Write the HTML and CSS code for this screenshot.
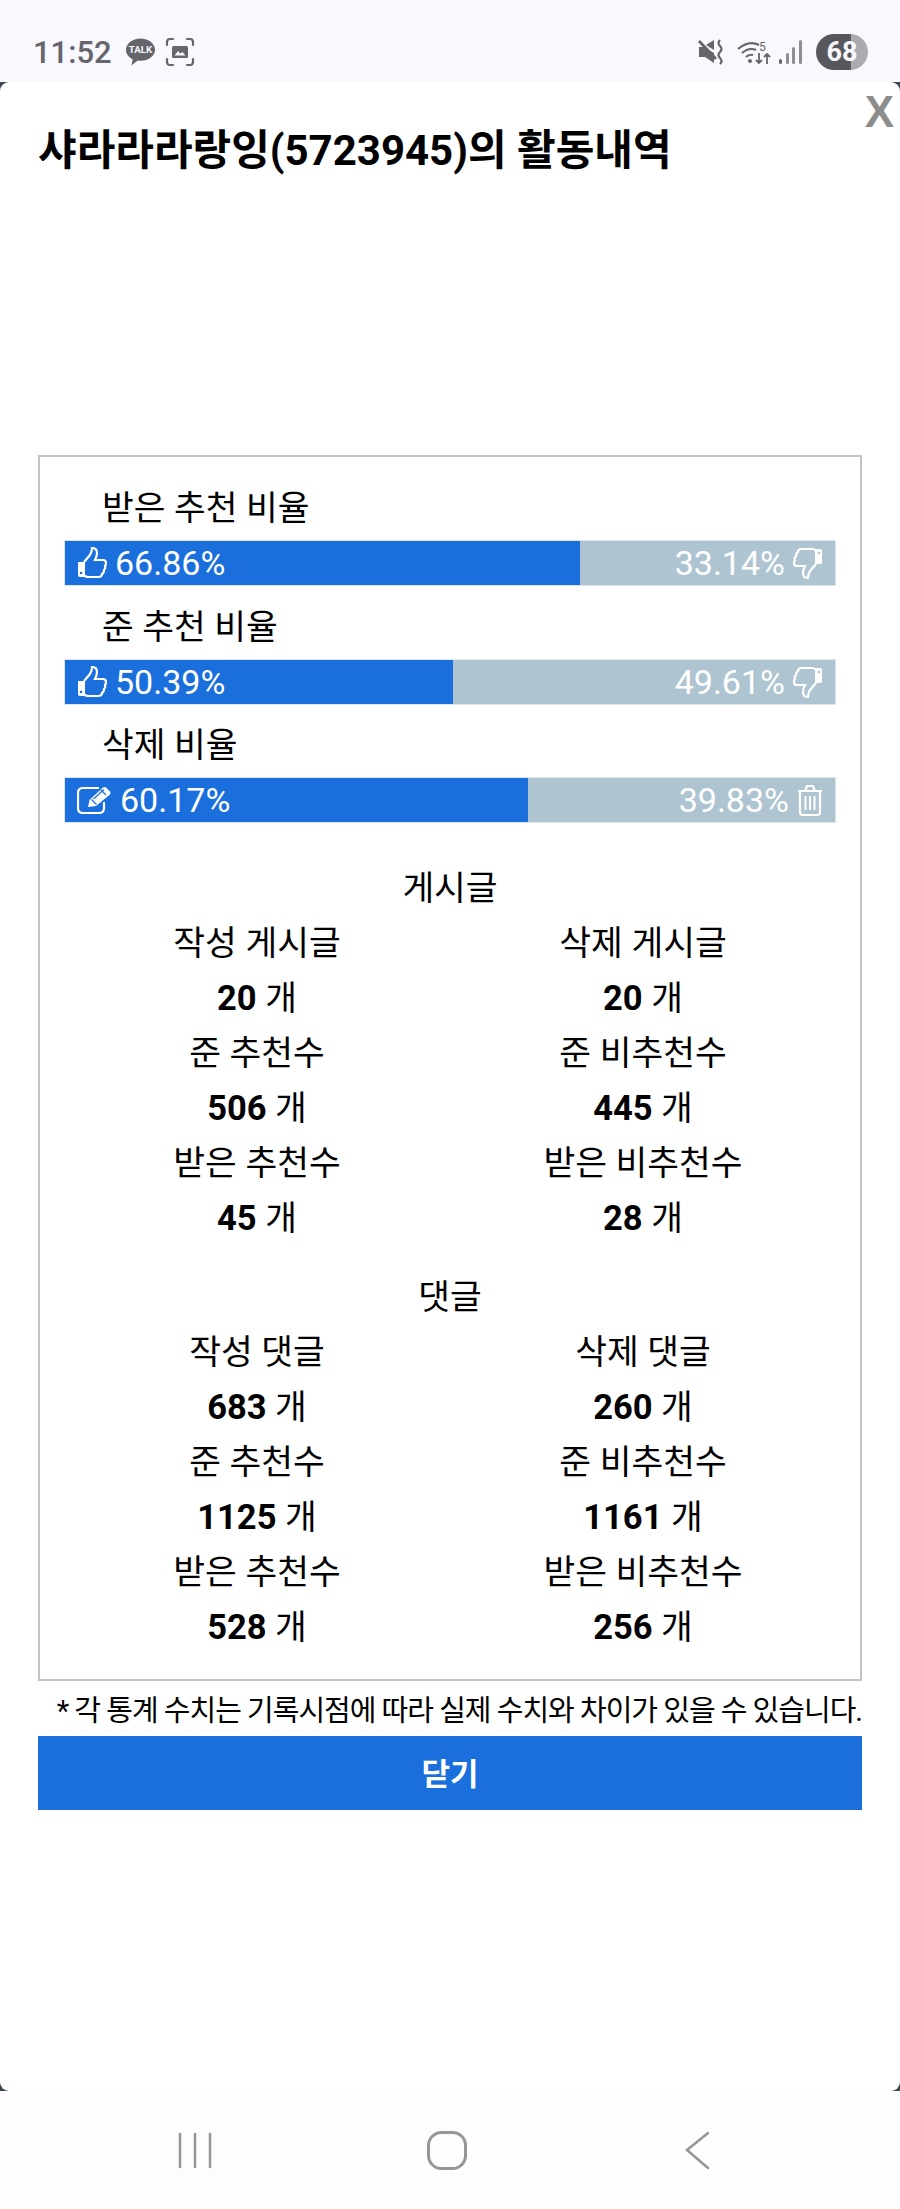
FILE: index.html
```html
<!DOCTYPE html>
<html lang="ko">
<head>
    <meta charset="UTF-8">
    <meta name="viewport" content="width=device-width, initial-scale=1.0">
    <title>활동내역</title>
    <link rel="stylesheet" href="styles.css">
</head>
<body>
    <header class="status">
        <span class="clock">11:52</span>
        <svg class="talk" viewBox="0 0 32 30"><path d="M16 1C7.700 1 1 6.300 1 12.600c0 4.200 2.800 7.800 7 9.800L6.600 29l6.600-5.200c.9.100 1.800.2 2.800.2 8.300 0 15-5.100 15-11.400S24.300 1 16 1z" fill="#65656b"/><text x="16" y="16.500" text-anchor="middle" class="talk-text">TALK</text></svg>
        <svg class="capture" viewBox="0 0 30 30" fill="none" stroke="#65656b" stroke-width="2.200" stroke-linecap="round"><path d="M2 8V5q0-3 3-3h3M22 2h3q3 0 3 3v3M28 22v3q0 3-3 3h-3M8 28H5q-3 0-3-3v-3"/><rect x="7" y="9" width="16" height="12" rx="1.500" fill="#65656b" stroke="none"/><path d="M9.500 18.500l3.500-4.500 2.500 2.500 2-1.500 3 3.500z" fill="#f8f8fe" stroke="none"/></svg>
        <span class="status-right">
            <svg class="mute" viewBox="0 0 26 26"><path d="M1 8h5l10 6v10L7 18H1z" fill="#65656b"/><path d="M1 2l17 18" stroke="#65656b" stroke-width="2.800"/><path d="M8 6l8-5v10z" fill="#65656b"/><path d="M22 1q-3 3 0 6t0 6 0 6 0 6" fill="none" stroke="#65656b" stroke-width="2.200"/></svg>
            <svg class="wifi" viewBox="0 0 35 26" fill="none" stroke="#65656b" stroke-width="2.200"><path d="M1 10q11-9 21-4M5 14q7-6 14-3M9 18q3-3 7-2"/><circle cx="13" cy="22" r="2" fill="#65656b" stroke="none"/><text x="22" y="12" class="wifi-text">5</text><path d="M22 14v10M19 21l3 3 3-3M30 25V15M27 18l3-3 3 3" stroke-width="1.800"/></svg>
            <svg class="signal" viewBox="0 0 23 24"><rect x="0" y="19" width="3" height="5" rx="1.500" fill="#65656b"/><rect x="7" y="13" width="3" height="11" rx="1.500" fill="#8d8d92"/><rect x="13" y="7" width="3" height="17" rx="1.500" fill="#8d8d92"/><rect x="20" y="0" width="3" height="24" rx="1.500" fill="#8d8d92"/></svg>
            <span class="battery">68</span>
        </span>
    </header>

    <div class="screen">
        <div class="popup">
            <a href="#" class="close-x">X</a>
            <h1 class="title">샤라라라랑잉(5723945)의 활동내역</h1>

            <div class="card">
                <div class="rates">
                    <div class="rate-label">받은 추천 비율</div>
                    <div class="bar">
                        <div class="bar-fill" style="width: 66.86%"></div>
                        <span class="bar-left">
                            <svg class="icon" viewBox="0 0 30 32" fill="none" stroke="#fff" stroke-width="2.200"><path d="M1 15h7v15H3q-2 0-2-2z" fill="#fff" stroke="none"/><circle cx="4" cy="26" r="1.300" fill="#1a6fdc" stroke="none"/><path d="M7 15l6-7q2-3 2-7 5 0 5 5 0 3-2 7h8q3 0 3 3 0 2-1 3 1 2-1 4 0 3-2 4 0 3-4 3H11q-2 0-4-1.500"/></svg>
                            66.86%
                        </span>
                        <span class="bar-right">
                            33.14%
                            <svg class="icon" viewBox="0 0 30 32" fill="none" stroke="#fff" stroke-width="2.200"><path d="M29 17h-7V2h5q2 0 2 2z" fill="#fff" stroke="none"/><circle cx="26" cy="6" r="1.300" fill="#aec5d1" stroke="none"/><path d="M23 17l-6 7q-2 3-2 7-5 0-5-5 0-3 2-7H4q-3 0-3-3 0-2 1-3-1-2 1-4 0-3 2-4 0-3 4-3h10q2 0 4 1.500"/></svg>
                        </span>
                    </div>

                    <div class="rate-label">준 추천 비율</div>
                    <div class="bar">
                        <div class="bar-fill" style="width: 50.39%"></div>
                        <span class="bar-left">
                            <svg class="icon" viewBox="0 0 30 32" fill="none" stroke="#fff" stroke-width="2.200"><path d="M1 15h7v15H3q-2 0-2-2z" fill="#fff" stroke="none"/><circle cx="4" cy="26" r="1.300" fill="#1a6fdc" stroke="none"/><path d="M7 15l6-7q2-3 2-7 5 0 5 5 0 3-2 7h8q3 0 3 3 0 2-1 3 1 2-1 4 0 3-2 4 0 3-4 3H11q-2 0-4-1.500"/></svg>
                            50.39%
                        </span>
                        <span class="bar-right">
                            49.61%
                            <svg class="icon" viewBox="0 0 30 32" fill="none" stroke="#fff" stroke-width="2.200"><path d="M29 17h-7V2h5q2 0 2 2z" fill="#fff" stroke="none"/><circle cx="26" cy="6" r="1.300" fill="#aec5d1" stroke="none"/><path d="M23 17l-6 7q-2 3-2 7-5 0-5-5 0-3 2-7H4q-3 0-3-3 0-2 1-3-1-2 1-4 0-3 2-4 0-3 4-3h10q2 0 4 1.500"/></svg>
                        </span>
                    </div>

                    <div class="rate-label">삭제 비율</div>
                    <div class="bar">
                        <div class="bar-fill" style="width: 60.17%"></div>
                        <span class="bar-left">
                            <svg class="icon-edit" viewBox="0 0 35 28" fill="none" stroke="#fff" stroke-width="2.200"><path d="M27 16v6q0 5-5 5H6q-5 0-5-5V7q0-5 5-5h16"/><path d="M11 21l1.500-7L26 1.500q1.500-1 3 0l4 4q1 1.500 0 3L19 20z" fill="#fff" stroke="none"/><path d="M14.500 13.500l5 5M16.500 13L27 3.500M24 4l5 5" stroke="#1a6fdc" stroke-width="1.200"/></svg>
                            60.17%
                        </span>
                        <span class="bar-right">
                            39.83%
                            <svg class="icon-trash" viewBox="0 0 26 32" fill="none" stroke="#fff" stroke-width="2.200"><path d="M1 7h24M3 7v21q0 3 3 3h14q3 0 3-3V7M8 7l2-5h6l2 5"/><path d="M8.500 12v14M13 12v14M17.500 12v14" stroke-width="2"/></svg>
                        </span>
                    </div>
                </div>

                <div class="stats">
                    <div class="stats-title">게시글</div>
                    <div class="stats-grid">
                        <div>작성 게시글</div>
                        <div>삭제 게시글</div>
                        <div><b>20</b> 개</div>
                        <div><b>20</b> 개</div>
                        <div>준 추천수</div>
                        <div>준 비추천수</div>
                        <div><b>506</b> 개</div>
                        <div><b>445</b> 개</div>
                        <div>받은 추천수</div>
                        <div>받은 비추천수</div>
                        <div><b>45</b> 개</div>
                        <div><b>28</b> 개</div>
                    </div>
                </div>

                <div class="stats">
                    <div class="stats-title">댓글</div>
                    <div class="stats-grid">
                        <div>작성 댓글</div>
                        <div>삭제 댓글</div>
                        <div><b>683</b> 개</div>
                        <div><b>260</b> 개</div>
                        <div>준 추천수</div>
                        <div>준 비추천수</div>
                        <div><b>1125</b> 개</div>
                        <div><b>1161</b> 개</div>
                        <div>받은 추천수</div>
                        <div>받은 비추천수</div>
                        <div><b>528</b> 개</div>
                        <div><b>256</b> 개</div>
                    </div>
                </div>
            </div>

            <p class="note">* 각 통계 수치는 기록시점에 따라 실제 수치와 차이가 있을 수 있습니다.</p>
            <button class="close-btn">닫기</button>
        </div>
    </div>

    <footer class="navbar">
        <svg class="nav-recent" viewBox="0 0 34 37" fill="none" stroke="#969696" stroke-width="2.500" stroke-linecap="round"><path d="M2 2v33M17 2v33M32 2v33"/></svg>
        <svg class="nav-home" viewBox="0 0 40 39" fill="none" stroke="#969696" stroke-width="3"><rect x="1.500" y="1.500" width="37" height="36" rx="13"/></svg>
        <svg class="nav-back" viewBox="0 0 25 39" fill="none" stroke="#969696" stroke-width="2.500" stroke-linecap="round"><path d="M23 2L2 19l21 18"/></svg>
    </footer>
</body>
</html>
```

FILE: styles.css
```css
*{
    margin: 0px;
    padding: 0px;
    box-sizing: border-box;
}
body{
    width: 900px;
    height: 2209px;
    display: flex;
    flex-direction: column;
    background-color: #fdfdfd;
    color: black;
    font-family: Roboto, "Noto Sans CJK KR", sans-serif;
}

/* Barra de status */
.status{
    height: 82px;
    background-color: #f8f8fe;
    display: flex;
    align-items: center;
    padding: 22px 32px 0px 33px;
    color: #65656b;
}
.clock{
    font-size: 31px;
    font-weight: 500;
    margin-right: 13px;
}
.talk{
    width: 31px;
    height: 30px;
    margin-right: 9px;
}
.talk-text{
    font-family: Roboto, sans-serif;
    font-size: 10px;
    font-weight: 700;
    fill: #f8f8fe;
}
.capture{
    width: 30px;
    height: 30px;
}
.status-right{
    margin-left: auto;
    display: flex;
    align-items: center;
}
.mute{
    width: 26px;
    height: 26px;
    margin-right: 13px;
}
.wifi{
    width: 35px;
    height: 26px;
    margin-right: 7px;
}
.wifi-text{
    font-family: Roboto, sans-serif;
    font-size: 12px;
    fill: #65656b;
    stroke: none;
}
.signal{
    width: 23px;
    height: 24px;
    margin-right: 14px;
}
.battery{
    width: 52px;
    height: 36px;
    border-radius: 18px;
    background: linear-gradient(to right, #58585c 68%, #ababaf 68%);
    color: #f8f8fe;
    font-size: 27px;
    font-weight: 700;
    line-height: 36px;
    text-align: center;
}

/* Popup */
.screen{
    height: 2009px;
    background-color: #3a4650;
}
.popup{
    height: 100%;
    background-color: white;
    border-radius: 9px;
    padding: 0px 38px;
    position: relative;
    display: flex;
    flex-direction: column;
}
.close-x{
    position: absolute;
    right: 6px;
    top: 5px;
    font-family: "Liberation Sans", sans-serif;
    font-size: 44px;
    font-weight: bold;
    color: #8c8c8c;
    text-decoration: none;
}
.title{
    font-size: 42px;
    font-weight: 700;
    line-height: 50px;
    margin-top: 44px;
    height: 329px;
}
.card{
    height: 1226px;
    border: 2px solid #c4c4c4;
    padding: 26px 24px 0px 24px;
}
.rates{
    margin-bottom: 38px;
}
.rate-label{
    font-size: 34.500px;
    line-height: 50px;
    padding-left: 38px;
    height: 57px;
}
.bar{
    height: 46px;
    border: 1px solid #dde5ea;
    background-color: #aec5d1;
    position: relative;
    display: flex;
    align-items: center;
    justify-content: space-between;
    color: white;
    font-size: 34px;
    padding: 0px 12px;
    margin-bottom: 15.500px;
}
.bar-fill{
    position: absolute;
    left: 0px;
    top: 0px;
    height: 100%;
    background-color: #1a6fdc;
}
.bar-left, .bar-right{
    position: relative;
    display: flex;
    align-items: center;
    gap: 8px;
}
.icon{
    width: 30px;
    height: 32px;
}
.icon-edit{
    width: 35px;
    height: 28px;
}
.icon-trash{
    width: 26px;
    height: 32px;
}
.stats{
    text-align: center;
    font-size: 34.500px;
    margin-bottom: 24px;
}
.stats-title{
    line-height: 55px;
}
.stats-grid{
    display: grid;
    grid-template-columns: 1fr 1fr;
    line-height: 55px;
}
.stats-grid b{
    font-weight: 700;
}
.note{
    font-size: 29px;
    line-height: 40px;
    margin-top: 10px;
    text-align: right;
    white-space: nowrap;
    letter-spacing: -1px;
}
.close-btn{
    height: 74px;
    margin-top: 5px;
    padding-bottom: 3px;
    border: none;
    background-color: #1a6fdc;
    color: white;
    font-family: inherit;
    font-size: 31px;
    font-weight: 700;
}

/* Barra de navegacao */
.navbar{
    height: 118px;
    display: flex;
    align-items: center;
}
.nav-recent{
    width: 34px;
    height: 37px;
    margin-left: 178px;
}
.nav-home{
    width: 40px;
    height: 39px;
    margin-left: 215px;
}
.nav-back{
    width: 25px;
    height: 39px;
    margin-left: 218px;
}
```
